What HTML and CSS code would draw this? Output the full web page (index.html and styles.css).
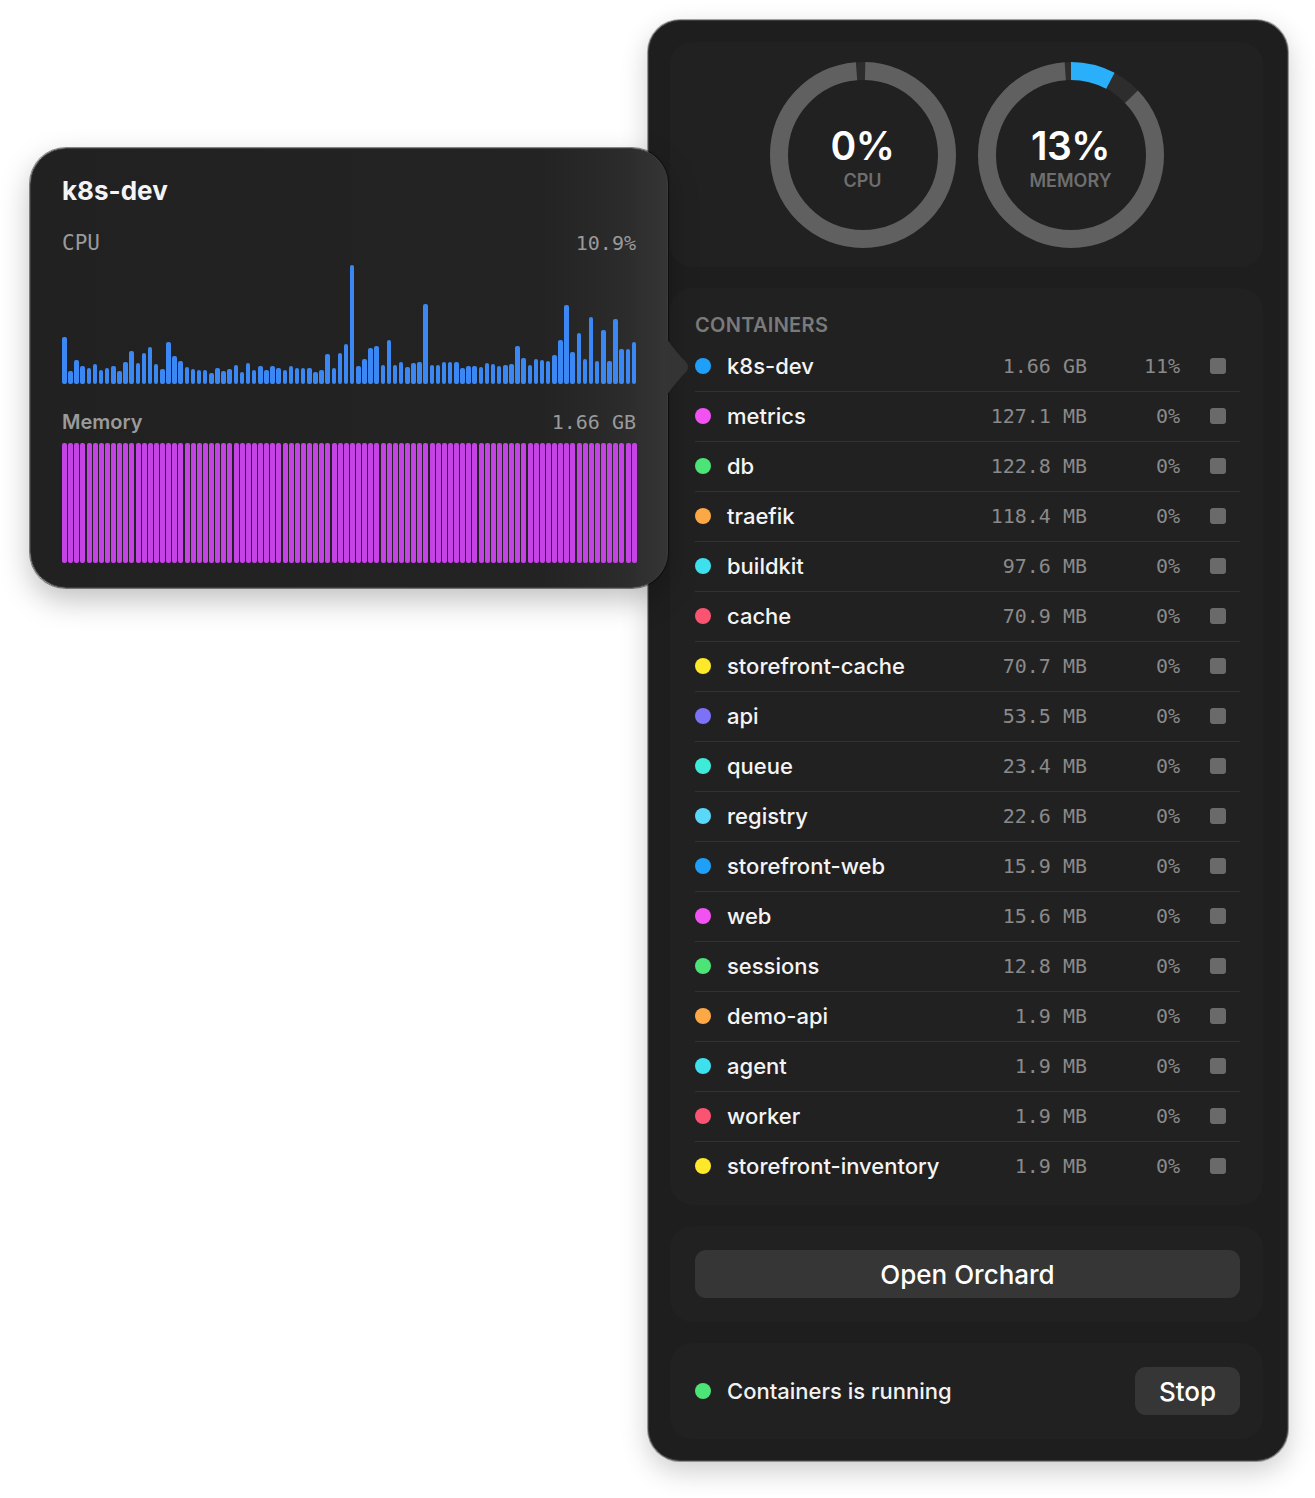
FILE: index.html
```html
<!DOCTYPE html>
<html lang="en">
<head>
  <meta charset="UTF-8">
  <meta name="viewport" content="width=device-width, initial-scale=1.0">
  <title>Orchard</title>
  <link rel="stylesheet" href="styles.css">
</head>
<body>

  <div class="stage">

    <div class="detail-popover">
      <h3>k8s-dev</h3>
      <div class="metric-head">
        <span class="mono">CPU</span>
        <span class="mono">10.9%</span>
      </div>
      <div class="bars cpu-bars" id="cpuBars"></div>
      <div class="metric-head memory-head">
        <span>Memory</span>
        <span class="mono">1.66 GB</span>
      </div>
      <div class="bars mem-bars" id="memBars"></div>
      <svg class="popover-arrow" width="24" height="56" viewBox="0 0 24 56">
        <path d="M0 0 C6 9 13 17 19 23 Q23 28 19 33 C13 39 6 47 0 56 Z" fill="#343434"/>
      </svg>
    </div>

    <div class="panel">

      <section class="card gauges">
        <div class="gauge">
          <svg width="186" height="186" viewBox="0 0 186 186">
            <g transform="rotate(-90 93 93)" fill="none" stroke-width="18">
              <circle cx="93" cy="93" r="84" stroke="#2d2d2d"/>
              <circle cx="93" cy="93" r="84" stroke="#606060" pathLength="360" stroke-dasharray="354 360" stroke-dashoffset="-1.5"/>
            </g>
          </svg>
          <div class="gauge-label">
            <strong>0%</strong>
            <span>CPU</span>
          </div>
        </div>
        <div class="gauge">
          <svg width="186" height="186" viewBox="0 0 186 186">
            <g transform="rotate(-90 93 93)" fill="none" stroke-width="18">
              <circle cx="93" cy="93" r="84" stroke="#2d2d2d"/>
              <circle cx="93" cy="93" r="84" stroke="#606060" pathLength="360" stroke-dasharray="310 360" stroke-dashoffset="-46"/>
              <circle cx="93" cy="93" r="84" stroke="#2aaffb" pathLength="360" stroke-dasharray="28 360" stroke-dashoffset="0"/>
            </g>
          </svg>
          <div class="gauge-label">
            <strong>13%</strong>
            <span>MEMORY</span>
          </div>
        </div>
      </section>

      <section class="card containers">
        <h4>Containers</h4>
        <ul class="container-list">
          <li><span class="dot blue"></span><span class="name">k8s-dev</span><span class="mem">1.66 GB</span><span class="pct">11%</span><span class="stop-btn"></span></li>
          <li><span class="dot pink"></span><span class="name">metrics</span><span class="mem">127.1 MB</span><span class="pct">0%</span><span class="stop-btn"></span></li>
          <li><span class="dot green"></span><span class="name">db</span><span class="mem">122.8 MB</span><span class="pct">0%</span><span class="stop-btn"></span></li>
          <li><span class="dot orange"></span><span class="name">traefik</span><span class="mem">118.4 MB</span><span class="pct">0%</span><span class="stop-btn"></span></li>
          <li><span class="dot cyan"></span><span class="name">buildkit</span><span class="mem">97.6 MB</span><span class="pct">0%</span><span class="stop-btn"></span></li>
          <li><span class="dot red"></span><span class="name">cache</span><span class="mem">70.9 MB</span><span class="pct">0%</span><span class="stop-btn"></span></li>
          <li><span class="dot yellow"></span><span class="name">storefront-cache</span><span class="mem">70.7 MB</span><span class="pct">0%</span><span class="stop-btn"></span></li>
          <li><span class="dot purple"></span><span class="name">api</span><span class="mem">53.5 MB</span><span class="pct">0%</span><span class="stop-btn"></span></li>
          <li><span class="dot teal"></span><span class="name">queue</span><span class="mem">23.4 MB</span><span class="pct">0%</span><span class="stop-btn"></span></li>
          <li><span class="dot sky"></span><span class="name">registry</span><span class="mem">22.6 MB</span><span class="pct">0%</span><span class="stop-btn"></span></li>
          <li><span class="dot blue"></span><span class="name">storefront-web</span><span class="mem">15.9 MB</span><span class="pct">0%</span><span class="stop-btn"></span></li>
          <li><span class="dot pink"></span><span class="name">web</span><span class="mem">15.6 MB</span><span class="pct">0%</span><span class="stop-btn"></span></li>
          <li><span class="dot green"></span><span class="name">sessions</span><span class="mem">12.8 MB</span><span class="pct">0%</span><span class="stop-btn"></span></li>
          <li><span class="dot orange"></span><span class="name">demo-api</span><span class="mem">1.9 MB</span><span class="pct">0%</span><span class="stop-btn"></span></li>
          <li><span class="dot cyan"></span><span class="name">agent</span><span class="mem">1.9 MB</span><span class="pct">0%</span><span class="stop-btn"></span></li>
          <li><span class="dot red"></span><span class="name">worker</span><span class="mem">1.9 MB</span><span class="pct">0%</span><span class="stop-btn"></span></li>
          <li><span class="dot yellow"></span><span class="name">storefront-inventory</span><span class="mem">1.9 MB</span><span class="pct">0%</span><span class="stop-btn"></span></li>
        </ul>
      </section>

      <section class="card actions">
        <button class="open-btn">Open Orchard</button>
      </section>

      <section class="card status">
        <span class="dot green"></span>
        <span class="status-text">Containers is running</span>
        <button class="stop-main">Stop</button>
      </section>

    </div>
  </div>

  <script>
    // cpu history samples, in px
    const cpuHistory = [
      47, 13, 24, 18, 16, 20, 14, 16, 18, 13, 22, 33, 21, 31, 37, 20, 15, 42, 28, 23,
      17, 15, 14, 14, 11, 16, 13, 15, 19, 12, 21, 14, 18, 14, 18, 16, 14, 18, 16, 16,
      16, 12, 14, 30, 16, 31, 40, 119, 18, 25, 36, 38, 19, 44, 19, 22, 17, 21, 22, 80,
      19, 19, 22, 22, 22, 16, 18, 18, 17, 21, 20, 18, 19, 20, 38, 26, 19, 25, 24, 23,
      29, 44, 79, 32, 51, 25, 67, 23, 54, 23, 65, 35, 35, 42
    ];

    const cpuBars = document.getElementById('cpuBars');
    const memBars = document.getElementById('memBars');

    cpuHistory.forEach(h => {
      const bar = document.createElement('span');
      bar.style.height = h + 'px';
      cpuBars.appendChild(bar);
      memBars.appendChild(document.createElement('span'));
    });
  </script>

</body>
</html>
```

FILE: styles.css
```css
* {
  box-sizing: border-box;
}
body {
  margin: 0;
  background: #ffffff;
  font-family: Inter, "Noto Sans", sans-serif;
  color: #f2f2f2;
}
.mono {
  font-family: "DejaVu Sans Mono", monospace;
}

.stage {
  position: relative;
  display: flex;
  justify-content: flex-end;
  padding: 20px 27px 36px 0;
}

/* detail popover */
.detail-popover {
  position: absolute;
  left: 30px;
  top: 148px;
  z-index: 2;
  width: 638px;
  height: 440px;
  padding: 27px 31px 26px;
  border: 1px solid #3c3c3c;
  border-radius: 36px;
  background: linear-gradient(90deg, #212121 0%, #232323 80%, #2b2b2b 93%, #353535 100%);
  box-shadow: 0 0 0 1px rgba(0, 0, 0, 0.45), 0 12px 30px rgba(0, 0, 0, 0.25);
}
.detail-popover h3 {
  margin: 0;
  font-size: 26px;
  line-height: 30px;
  font-weight: 700;
  color: #f4f4f4;
}
.metric-head {
  display: flex;
  justify-content: space-between;
  margin-top: 25px;
  font-size: 20px;
  line-height: 24px;
  color: #9a9a9a;
}
.metric-head span:first-child.mono {
  font-size: 21px;
}
.memory-head {
  margin-top: 26px;
}
.memory-head span:first-child {
  font-weight: 600;
}
.bars {
  display: flex;
  align-items: flex-end;
  height: 120px;
}
.cpu-bars {
  gap: 1.6px;
  margin-top: 9px;
}
.cpu-bars span {
  flex: 1;
  border-radius: 2px;
  background: #3b88f4;
}
.mem-bars {
  gap: 1.1px;
  margin-top: 9px;
}
.mem-bars span {
  flex: 1;
  height: 100%;
  border-radius: 2px;
  background: #c542e4;
}
.popover-arrow {
  position: absolute;
  left: 100%;
  top: 190px;
}

/* main panel */
.panel {
  display: flex;
  flex-direction: column;
  gap: 21px;
  width: 640px;
  padding: 21px 24px 21px 21px;
  background: #1e1e1e;
  border: 1.5px solid #3d3d3d;
  border-radius: 32px;
  box-shadow: 0 0 0 1px rgba(0, 0, 0, 0.35), 0 10px 28px rgba(0, 0, 0, 0.2);
}
.card {
  background: #212121;
  border-radius: 22px;
}

.gauges {
  display: flex;
  justify-content: center;
  gap: 22px;
  padding: 20px 0 19px;
}
.gauge {
  position: relative;
  width: 186px;
  height: 186px;
}
.gauge svg {
  display: block;
}
.gauge-label {
  position: absolute;
  inset: 0;
  display: flex;
  flex-direction: column;
  align-items: center;
  justify-content: center;
  padding-top: 6px;
}
.gauge-label strong {
  font-size: 39px;
  line-height: 44px;
  font-weight: 600;
  letter-spacing: -0.5px;
  color: #ffffff;
}
.gauge-label span {
  margin-top: 2px;
  font-size: 18px;
  line-height: 22px;
  font-weight: 600;
  color: #6e6e6e;
}

.containers {
  padding: 25px 23px 14px 25px;
}
.containers h4 {
  margin: 0 0 4px;
  font-size: 20px;
  line-height: 24px;
  font-weight: 600;
  letter-spacing: 0.3px;
  text-transform: uppercase;
  color: #7a7a7a;
}
.container-list {
  list-style: none;
  margin: 0;
  padding: 0;
}
.container-list li {
  display: flex;
  align-items: center;
  height: 50px;
}
.container-list li + li {
  border-top: 1px solid #323232;
  padding-bottom: 1px;
}
.dot {
  width: 16px;
  height: 16px;
  border-radius: 50%;
  flex-shrink: 0;
  margin-right: 16px;
}
.blue { background: #1ea0f8; }
.pink { background: #f252f2; }
.green { background: #4ce377; }
.orange { background: #fca846; }
.cyan { background: #3ee0ee; }
.red { background: #fb5472; }
.yellow { background: #fde92a; }
.purple { background: #7d72f7; }
.teal { background: #3eead8; }
.sky { background: #5ad8f8; }

.name {
  flex: 1;
  font-size: 22px;
  font-weight: 500;
  color: #f4f4f4;
}
.mem, .pct {
  font-family: "DejaVu Sans Mono", monospace;
  font-size: 20px;
  color: #8a8a8a;
  text-align: right;
}
.pct {
  width: 93px;
}
.stop-btn {
  width: 16px;
  height: 16px;
  margin: 0 14px 0 30px;
  border-radius: 3px;
  background: #6a6a6a;
}

.actions {
  padding: 24px 23px 24px 25px;
}
button {
  border: none;
  border-radius: 11px;
  background: #363636;
  color: #ffffff;
  font-family: Inter, "Noto Sans", sans-serif;
  font-size: 26px;
  font-weight: 500;
  height: 48px;
  cursor: pointer;
}
.open-btn {
  width: 100%;
}

.status {
  display: flex;
  align-items: center;
  padding: 24px 23px 24px 25px;
}
.status-text {
  flex: 1;
  font-size: 22px;
  font-weight: 500;
}
.stop-main {
  width: 105px;
}
```
